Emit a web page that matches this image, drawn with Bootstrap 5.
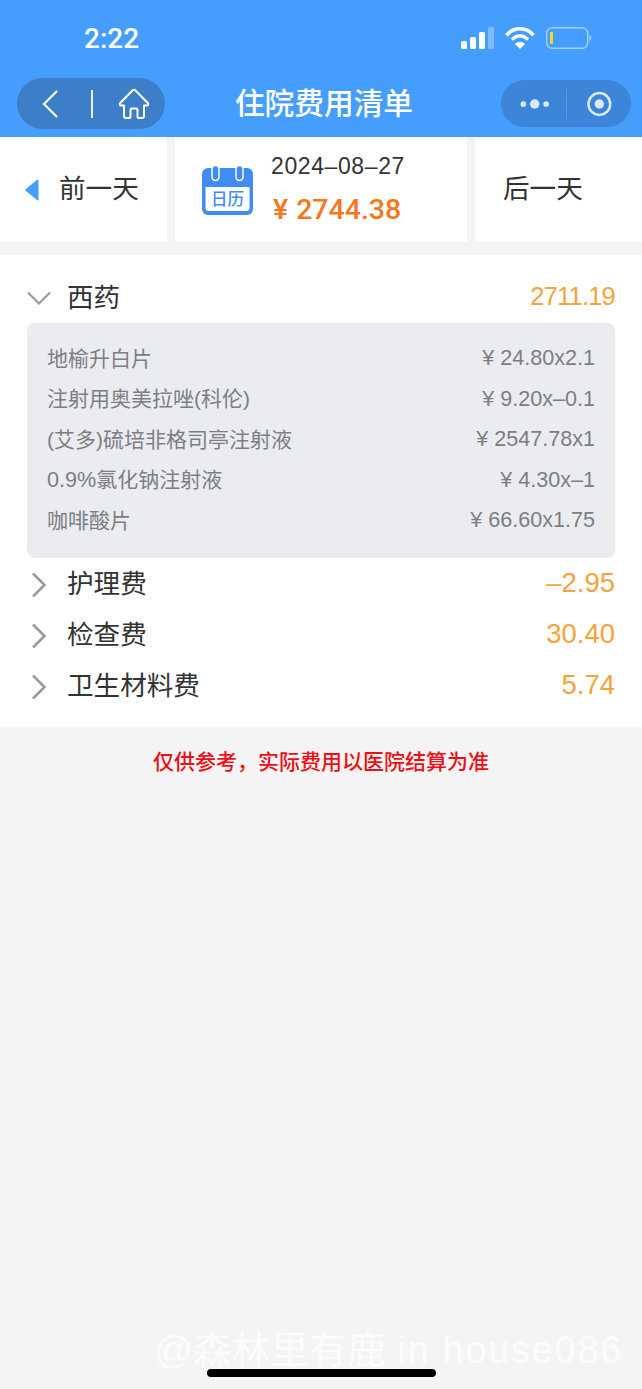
<!doctype html>
<html lang="zh-CN">
<head>
<meta charset="utf-8">
<title>住院费用清单</title>
<link href="https://cdn.jsdelivr.net/npm/bootstrap@5.3.0/dist/css/bootstrap.min.css" rel="stylesheet">
<style>
html,body{height:100%}
body{width:642px;height:1389px;overflow:hidden;background:#f4f4f5;font-family:"Liberation Sans","Noto Sans CJK SC",sans-serif;color:#333;position:relative}
.hdr{background:#459efe;height:137px;color:#fff}
.sbar{height:78px;padding:0 49px 2px 84px}
.clock{font-family:Roboto,sans-serif;font-size:28px;font-weight:500;line-height:1;width:60px;margin-top:2px}
.sicons{gap:11px}
.navrow{height:59px;padding:0 11px 8px 17px}
.pill-l{width:148px;height:51px;border-radius:26px;background:#3c7ec7;padding:0 0 0 25px;flex:none}
.pill-r{width:130px;height:47px;border-radius:24px;background:#3d85d8;margin-top:2px;padding:0 19px;flex:none}
.vsep{width:2px;height:28px;background:#e8f2ff;margin:0 25px 0 33px}
.vsep2{width:1px;height:30px;background:#5a98e0;margin:0 20px 0 16px}
.ttl{font-size:29.700px;font-weight:500;line-height:1;padding-right:18px;align-self:center}
.daybar{height:105px;gap:8px}
.cell{background:#fff}
.c-side{width:167px}
.c-prev{padding-left:25px}
.c-next{padding-left:28px}
.c-mid{width:292px;padding-left:27px}
.daytxt{font-size:26.600px;line-height:1;color:#333}
.prevtxt{margin-left:20px}
.dt{font-size:23px;line-height:1;margin-bottom:18px;color:#333;letter-spacing:.6px}
.amt{font-family:Roboto,"Liberation Sans",sans-serif;font-size:28.500px;font-weight:500;line-height:1;color:#f5771c;white-space:nowrap;margin-left:2px}
.yen{margin-right:8px}
.cal-box{margin-right:18px}
.main{background:#fff;margin-top:13px;height:472px;padding:18px 27px 0}
.grp{height:51px;font-size:26.600px;line-height:1}
.g1{height:50px}
.ghead{gap:16px}
.chev{width:24px;flex:none}
.val{font-size:27.500px;color:#f5a33b;margin-bottom:3px}
.val-tight{font-size:25.500px;letter-spacing:-.8px;margin-bottom:2px}
.detail{background:#ebecf0;border-radius:8px;height:235px;padding:15px 20px 0;font-size:21px;color:#7d7e82;margin-bottom:1px}
.ditem{height:40.500px}
.ln{font-size:21.600px}
.note{color:#ec0f13;font-size:21px;font-weight:500;line-height:1;margin-top:24px}
.wmark{position:absolute;left:154px;top:1331px;font-size:38px;line-height:1;color:#fcfcfc;letter-spacing:.6px;white-space:nowrap}
.wl{letter-spacing:1.700px}
.homebar{position:absolute;left:207px;top:1369px;width:229px;height:8px;border-radius:4px;background:#000}
</style>
</head>
<body>
<div class="hdr">
  <div class="sbar d-flex justify-content-between align-items-center">
    <div class="clock">2:22</div>
    <div class="sicons d-flex align-items-center">
      <svg width="33" height="22" viewBox="0 0 33 22"><rect x="0" y="14" width="6" height="8" rx="1.5" fill="#fff"/><rect x="9" y="10" width="6" height="12" rx="1.5" fill="#fff"/><rect x="18" y="5" width="6" height="17" rx="1.5" fill="#fff"/><rect x="27" y="0" width="6" height="22" rx="1.5" fill="#fff" opacity=".3"/></svg>
      <svg width="30" height="22" viewBox="0 0 30 22"><path d="M1.500 8.200C9-.4 21-.4 28.500 8.200" fill="none" stroke="#fff" stroke-width="3.600"/><path d="M7 12.600c4.700-5 11.300-5 16 0" fill="none" stroke="#fff" stroke-width="3.400"/><path d="M15 22l-5-5c2.800-2.600 7.200-2.600 10 0z" fill="#fff"/></svg>
      <svg width="47" height="22" viewBox="0 0 47 22"><rect x=".7" y=".7" width="41" height="20.600" rx="5.500" fill="none" stroke="#a9d0fb" stroke-width="1.400"/><rect x="4" y="5" width="3" height="12" rx="1" fill="#f1d92d"/><path d="M43.500 8c2.300.6 2.300 5.400 0 6z" fill="#a9d0fb"/></svg>
    </div>
  </div>
  <div class="navrow d-flex justify-content-between align-items-start">
    <div class="pill-l d-flex align-items-center">
      <svg width="16" height="28" viewBox="0 0 16 28"><path d="M15 1L2 14l13 13" fill="none" stroke="#fff" stroke-width="2.200"/></svg>
      <div class="vsep"></div>
      <svg width="32" height="32" viewBox="0 0 32 32"><path d="M14.500 2.500L2.200 15a1.500 1.500 0 0 0 1 2.600H6V28a2 2 0 0 0 2 2h3.500a1 1 0 0 0 1-1v-7a1.500 1.500 0 0 1 1.500-1.500h4a1.500 1.500 0 0 1 1.500 1.500v7a1 1 0 0 0 1 1H24a2 2 0 0 0 2-2V17.600h2.800a1.500 1.500 0 0 0 1-2.600L17.500 2.500a2 2 0 0 0-3 0z" fill="none" stroke="#fff" stroke-width="2" stroke-linejoin="round"/></svg>
    </div>
    <div class="ttl flex-grow-1 text-center">住院费用清单</div>
    <div class="pill-r d-flex align-items-center">
      <svg width="32" height="14" viewBox="0 0 32 14"><circle cx="3.500" cy="7" r="3" fill="#dbe9fb"/><circle cx="15.500" cy="7" r="5" fill="#dbe9fb"/><circle cx="27.500" cy="7" r="3" fill="#dbe9fb"/></svg>
      <div class="vsep2"></div>
      <svg width="26" height="26" viewBox="0 0 26 26"><circle cx="13" cy="13" r="11.500" fill="none" stroke="#dbe9fb" stroke-width="2.600"/><circle cx="13" cy="13" r="5" fill="#dbe9fb"/></svg>
    </div>
  </div>
</div>

<div class="daybar d-flex">
  <div class="cell c-side c-prev d-flex align-items-center">
    <svg width="14" height="22" viewBox="0 0 14 22"><path d="M12.500 0.500L1 10a1.300 1.300 0 0 0 0 2l11.500 9.500a1 1 0 0 0 1-.7V1.200a1 1 0 0 0-1-.7z" fill="#459efe"/></svg>
    <div class="daytxt prevtxt">前一天</div>
  </div>
  <div class="cell c-mid d-flex align-items-center">
    <div class="cal-box d-flex">
      <svg width="51" height="50" viewBox="0 0 51 50"><path d="M6 3h39a6 6 0 0 1 6 6v35a6 6 0 0 1-6 6H6a6 6 0 0 1-6-6V9a6 6 0 0 1 6-6z" fill="#3e8cf4"/><path d="M3.500 22h44v21a3 3 0 0 1-3 3h-38a3 3 0 0 1-3-3z" fill="#fff"/><rect x="10" y="0.500" width="7" height="15" rx="3.500" fill="#3e8cf4" stroke="#fff" stroke-width="1.500"/><rect x="34" y="0.500" width="7" height="15" rx="3.500" fill="#3e8cf4" stroke="#fff" stroke-width="1.500"/><text x="25.500" y="40" text-anchor="middle" font-size="16.500" font-weight="500" fill="#3e8cf4" font-family="Noto Sans CJK SC">日历</text></svg>
    </div>
    <div>
      <div class="dt">2024–08–27</div>
      <div class="amt"><span class="yen">¥</span>2744.38</div>
    </div>
  </div>
  <div class="cell c-side c-next flex-grow-1 d-flex align-items-center">
    <div class="daytxt">后一天</div>
  </div>
</div>

<div class="main">
  <div class="grp g1 d-flex justify-content-between align-items-center">
    <div class="ghead d-flex align-items-center">
      <svg class="chev" width="24" height="14" viewBox="0 0 24 14"><path d="M1 1.500l11 11 11-11" fill="none" stroke="#9b9b9b" stroke-width="2.200"/></svg>
      <span>西药</span>
    </div>
    <span class="val val-tight">2711.19</span>
  </div>
  <div class="detail">
    <div class="ditem d-flex justify-content-between align-items-center"><span>地榆升白片</span><span class="ln">¥ 24.80x2.1</span></div>
    <div class="ditem d-flex justify-content-between align-items-center"><span>注射用奥美拉唑(科伦)</span><span class="ln">¥ 9.20x–0.1</span></div>
    <div class="ditem d-flex justify-content-between align-items-center"><span>(艾多)硫培非格司亭注射液</span><span class="ln">¥ 2547.78x1</span></div>
    <div class="ditem d-flex justify-content-between align-items-center"><span><span class="ln">0.9%</span>氯化钠注射液</span><span class="ln">¥ 4.30x–1</span></div>
    <div class="ditem d-flex justify-content-between align-items-center"><span>咖啡酸片</span><span class="ln">¥ 66.60x1.75</span></div>
  </div>
  <div class="grp d-flex justify-content-between align-items-center">
    <div class="ghead d-flex align-items-center">
      <svg class="chev" width="24" height="24" viewBox="0 0 24 24"><path d="M6 .5l11.500 11.500L6 23.500" fill="none" stroke="#9b9b9b" stroke-width="2.600"/></svg>
      <span>护理费</span>
    </div>
    <span class="val">–2.95</span>
  </div>
  <div class="grp d-flex justify-content-between align-items-center">
    <div class="ghead d-flex align-items-center">
      <svg class="chev" width="24" height="24" viewBox="0 0 24 24"><path d="M6 .5l11.500 11.500L6 23.500" fill="none" stroke="#9b9b9b" stroke-width="2.600"/></svg>
      <span>检查费</span>
    </div>
    <span class="val">30.40</span>
  </div>
  <div class="grp d-flex justify-content-between align-items-center">
    <div class="ghead d-flex align-items-center">
      <svg class="chev" width="24" height="24" viewBox="0 0 24 24"><path d="M6 .5l11.500 11.500L6 23.500" fill="none" stroke="#9b9b9b" stroke-width="2.600"/></svg>
      <span>卫生材料费</span>
    </div>
    <span class="val">5.74</span>
  </div>
</div>
<div class="note text-center">仅供参考，实际费用以医院结算为准</div>
<div class="wmark">@森林里有鹿 <span class="wl">in house086</span></div>
<div class="homebar"></div>
<script src="https://cdn.jsdelivr.net/npm/bootstrap@5.3.0/dist/js/bootstrap.bundle.min.js"></script>
</body>
</html>
